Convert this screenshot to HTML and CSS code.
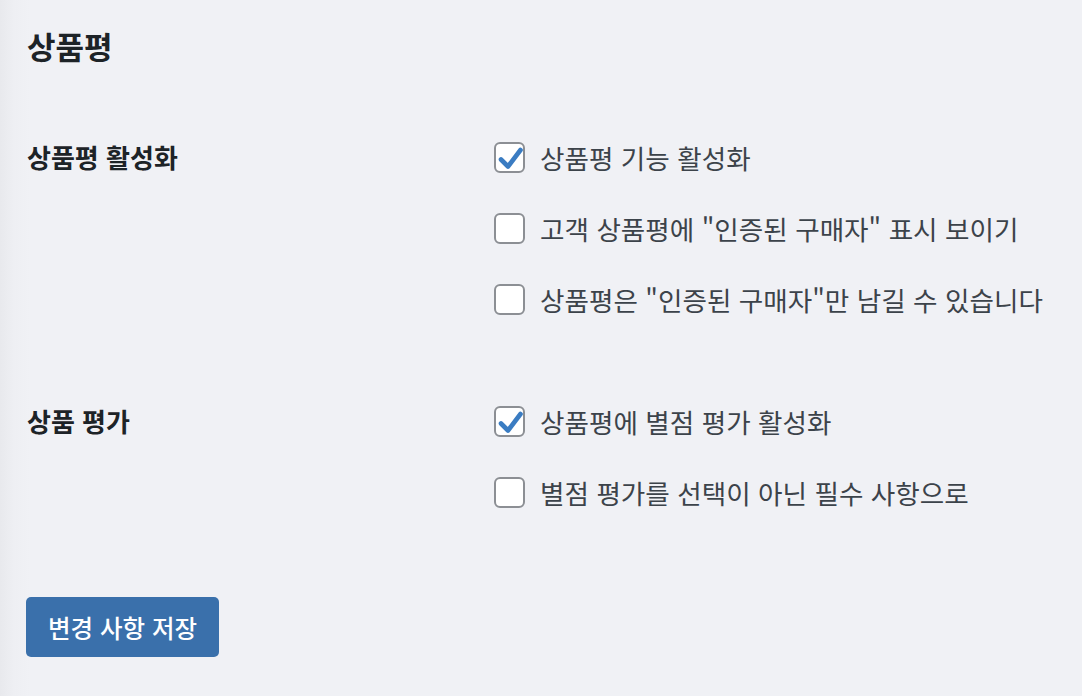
FILE: index.html
```html
<!DOCTYPE html>
<html lang="ko">

<head>
    <meta charset="UTF-8">
    <meta name="viewport" content="width=device-width, initial-scale=1.0">
    <title>상품평 설정</title>

    <link rel="stylesheet" href="styles.css">
</head>

<body>
    <form class="settings" onsubmit="event.preventDefault()">
        <h2 class="title">상품평</h2>

        <div class="row first">
            <div class="row-label">상품평 활성화</div>
            <div class="options">
                <label class="option">
                    <input type="checkbox" checked>
                    <span class="box">
                        <svg viewBox="0 0 31 31"><polyline points="7,17.5 14,24.5 26.5,8" /></svg>
                    </span>
                    <span class="text">상품평 기능 활성화</span>
                </label>
                <label class="option">
                    <input type="checkbox">
                    <span class="box">
                        <svg viewBox="0 0 31 31"><polyline points="7,17.5 14,24.5 26.5,8" /></svg>
                    </span>
                    <span class="text">고객 상품평에 "인증된 구매자" 표시 보이기</span>
                </label>
                <label class="option">
                    <input type="checkbox">
                    <span class="box">
                        <svg viewBox="0 0 31 31"><polyline points="7,17.5 14,24.5 26.5,8" /></svg>
                    </span>
                    <span class="text">상품평은 "인증된 구매자"만 남길 수 있습니다</span>
                </label>
            </div>
        </div>

        <div class="row second">
            <div class="row-label">상품 평가</div>
            <div class="options">
                <label class="option">
                    <input type="checkbox" checked>
                    <span class="box">
                        <svg viewBox="0 0 31 31"><polyline points="7,17.5 14,24.5 26.5,8" /></svg>
                    </span>
                    <span class="text">상품평에 별점 평가 활성화</span>
                </label>
                <label class="option">
                    <input type="checkbox">
                    <span class="box">
                        <svg viewBox="0 0 31 31"><polyline points="7,17.5 14,24.5 26.5,8" /></svg>
                    </span>
                    <span class="text">별점 평가를 선택이 아닌 필수 사항으로</span>
                </label>
            </div>
        </div>

        <button type="submit" class="save">변경 사항 저장</button>
    </form>
</body>

</html>
```

FILE: styles.css
```css
body {
    margin: 0;
    min-height: 696px;
    font-family: "Noto Sans CJK KR", "Noto Sans", sans-serif;
    background: linear-gradient(to right, #e8e9ed 0, #eeeff3 14px, #f0f1f5 30px);
    color: #1d2327;
}

.settings {
    padding: 20px 26px;
}

.title {
    margin: 0;
    padding-left: 1px;
    font-size: 31px;
    line-height: 52px;
    font-weight: 700;
    color: #1d2327;
}

.row {
    display: grid;
    grid-template-columns: 468px 1fr;
}

.row.first {
    margin-top: 65px;
}

.row.second {
    margin-top: 82px;
}

.row-label {
    padding-left: 1px;
    font-size: 26px;
    line-height: 40px;
    font-weight: 700;
    color: #1d2327;
}

.options {
    display: flex;
    flex-direction: column;
    gap: 31px;
}

.option {
    display: flex;
    align-items: center;
    gap: 15px;
    height: 40px;
    cursor: pointer;
}

.option input {
    display: none;
}

.box {
    width: 31px;
    height: 31px;
    box-sizing: border-box;
    border: 2px solid #8c8f94;
    border-radius: 6px;
    background-color: #fff;
    position: relative;
    flex: none;
}

.box svg {
    position: absolute;
    left: -2px;
    top: -2px;
    width: 31px;
    height: 31px;
    display: none;
}

.box polyline {
    fill: none;
    stroke: #3a7cc2;
    stroke-width: 4.6;
    stroke-linecap: round;
    stroke-linejoin: round;
}

.option input:checked + .box svg {
    display: block;
}

.text {
    font-size: 26.6px;
    color: #3c434a;
    white-space: nowrap;
}

.save {
    display: block;
    margin-top: 85px;
    height: 60px;
    padding: 0 22px;
    font-family: inherit;
    font-size: 24.5px;
    font-weight: 500;
    color: #fff;
    background-color: #3a70ab;
    border: none;
    border-radius: 5px;
    cursor: pointer;
}

.save:hover {
    background-color: #336399;
}
```
